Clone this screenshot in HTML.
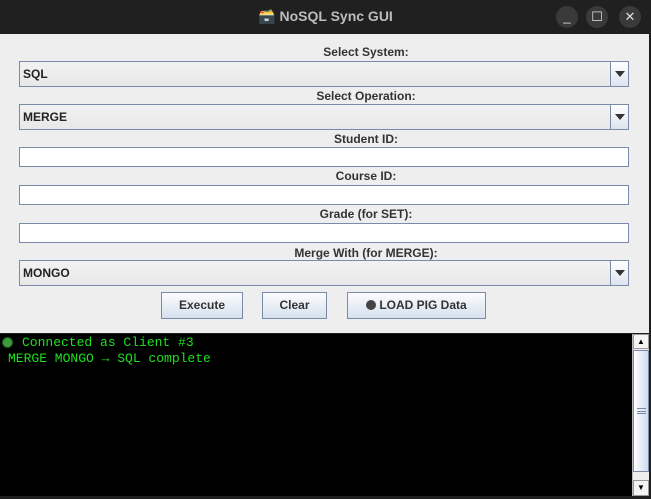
<!DOCTYPE html><html><head><style>
*{margin:0;padding:0;box-sizing:border-box}
body{width:651px;height:499px;background:#1e1e1e;position:relative;overflow:hidden;font-family:"Liberation Sans","DejaVu Sans",sans-serif}
.tb{position:absolute;left:0;top:0;width:651px;height:34px;background:#202020;color:#bdbdbd;font-size:14px;font-weight:bold}
.tb .t{position:absolute;left:0;width:651px;top:8px;text-align:center}
.wb{position:absolute;top:6px;width:22px;height:22px;border-radius:11px;background:#3a3a3a;color:#e0e0e0;font-size:13px;text-align:center;line-height:22px;font-weight:normal}
.main{position:absolute;left:0;top:34px;width:649px;height:299px;background:#eeeeee}
.lbl{position:absolute;left:0;width:732px;text-align:center;font-size:12px;font-weight:bold;color:#333}
.cb{position:absolute;left:19px;width:610px;height:26px;border:1px solid #7a8aa8;background:linear-gradient(#f2f2f2,#e8e8e8);font-size:12px;font-weight:bold;color:#222;padding:5px 3px}
.cb .ar{position:absolute;right:0;top:0;width:18px;height:24px;border-left:1px solid #7a8aa8;background:linear-gradient(#fff,#dde4ee)}
.cb .ar:after{content:"";position:absolute;left:4px;top:9px;border-left:5px solid transparent;border-right:5px solid transparent;border-top:6px solid #333}
.tf{position:absolute;left:19px;width:610px;height:20px;border:1px solid #7a8aa8;background:#fff}
.bt{position:absolute;top:258px;height:27px;border:1px solid #7a8aa8;background:linear-gradient(#fbfcfe,#d6e1ee);font-size:12px;font-weight:bold;color:#333;text-align:center;line-height:25px}
.con{position:absolute;left:0;top:334px;width:632px;height:162px;background:#000}
.txt{position:absolute;color:#1ee01e;font-family:"Liberation Mono","DejaVu Sans Mono",monospace;font-size:13px;line-height:16px;white-space:pre}
.dot{position:absolute;left:2px;top:3px;width:11px;height:11px;border-radius:6px;background:#3c9a3c;border:1px solid #1a5a1a}
.sb{position:absolute;left:632px;top:334px;width:17px;height:162px;background:#eee;border-left:1px solid #bbb}
</style></head><body>
<div class="tb"><div class="t">🗃️ NoSQL Sync GUI</div>
<div class="wb" style="left:556px">_</div><div class="wb" style="left:586px">☐</div><div class="wb" style="left:619px">✕</div></div>
<div class="main">
<div class="lbl" style="top:11px">Select System:</div>
<div class="cb" style="top:27px">SQL<div class="ar"></div></div>
<div class="lbl" style="top:55px">Select Operation:</div>
<div class="cb" style="top:70px">MERGE<div class="ar"></div></div>
<div class="lbl" style="top:98px">Student ID:</div>
<div class="tf" style="top:113px"></div>
<div class="lbl" style="top:135px">Course ID:</div>
<div class="tf" style="top:151px"></div>
<div class="lbl" style="top:173px">Grade (for SET):</div>
<div class="tf" style="top:189px"></div>
<div class="lbl" style="top:212px">Merge With (for MERGE):</div>
<div class="cb" style="top:226px">MONGO<div class="ar"></div></div>
<div class="bt" style="left:161px;width:82px">Execute</div>
<div class="bt" style="left:262px;width:65px">Clear</div>
<div class="bt" style="left:347px;width:139px"><span style="display:inline-block;width:10px;height:10px;border-radius:5px;background:#444;vertical-align:-1px;margin-right:3px"></span>LOAD PIG Data</div>
</div>
<div class="con"><div class="dot"></div>
<div class="txt" style="left:22px;top:1px">Connected as Client #3</div>
<div class="txt" style="left:8px;top:17px">MERGE MONGO → SQL complete</div></div>
<div class="sb">
<div style="position:absolute;left:0;top:0;width:16px;height:15px;border:1px solid #999;background:#f4f4f4;font-size:8px;text-align:center;line-height:13px">▲</div>
<div style="position:absolute;left:0;top:16px;width:16px;height:122px;border:1px solid #7a8aa8;background:linear-gradient(90deg,#fff,#cfdcee)"><div style="position:absolute;left:3px;top:57px;width:9px;height:6px;border-top:1px solid #7a8aa8;border-bottom:1px solid #7a8aa8"><div style="margin-top:2px;border-top:1px solid #7a8aa8"></div></div></div>
<div style="position:absolute;left:0;top:146px;width:16px;height:16px;border:1px solid #999;background:#f4f4f4;font-size:8px;text-align:center;line-height:14px">▼</div>
</div>
</body></html>
